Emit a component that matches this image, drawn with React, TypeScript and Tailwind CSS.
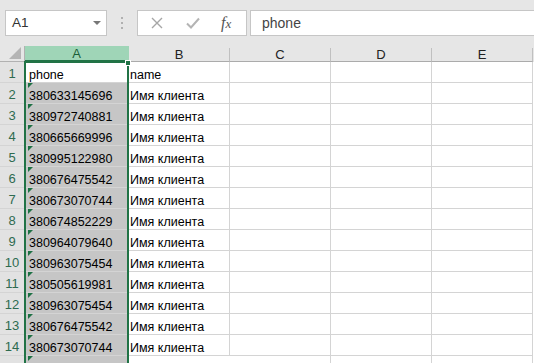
import React from 'react'

const phones = [
  '380633145696',
  '380972740881',
  '380665669996',
  '380995122980',
  '380676475542',
  '380673070744',
  '380674852229',
  '380964079640',
  '380963075454',
  '380505619981',
  '380963075454',
  '380676475542',
  '380673070744',
]

const cols = ['C', 'D', 'E']
const font = { fontFamily: '"Liberation Sans", Arial, sans-serif' }

function Triangle() {
  return (
    <span className="absolute left-[3px] top-0 h-0 w-0 border-r-[5px] border-t-[5px] border-r-transparent border-t-[#1e7145]" />
  )
}

function Row({ n, a, b, first, last }: { n: number; a: string; b: string; first?: boolean; last?: boolean }) {
  return (
    <div className="flex h-[21px] text-[12.5px] leading-[13px] text-black">
      <div className="flex w-[25px] shrink-0 items-end justify-center border-b border-r border-b-[#d4d4d4] border-r-[#b1b1b1] bg-[#e2e2e2] pb-[1px] text-[13px] leading-[14px] text-[#2e6b50]">
        {last ? '' : n}
      </div>
      <div
        className={`relative flex w-[104px] shrink-0 items-end border-b border-r border-[#d4d4d4] pl-[4px] ${
          first ? 'bg-white' : 'bg-[#c6c6c6]'
        }`}
      >
        {!first && <Triangle />}
        {a}
      </div>
      <div
        className={`flex w-[101px] shrink-0 items-end border-b border-[#d4d4d4] pl-[1px] ${
          last ? '' : 'border-r'
        }`}
      >
        {b}
      </div>
      {cols.map((c) => (
        <div key={c} className="w-[101px] shrink-0 border-b border-r border-[#d4d4d4]" />
      ))}
    </div>
  )
}

export default function App() {
  return (
    <div className="relative h-[363px] w-[534px] overflow-hidden bg-white" style={font}>
      {/* toolbar */}
      <div className="flex h-[46px] bg-[#e6e6e6] pl-[5px] pt-[10px]">
        <div className="relative flex h-[26px] w-[102px] shrink-0 items-center border border-[#c6c6c6] bg-white pl-[6px] text-[13.5px] text-[#333]">
          A1
          <span className="absolute right-[5px] top-[10px] h-0 w-0 border-l-[4px] border-r-[4px] border-t-[4px] border-l-transparent border-r-transparent border-t-[#777]" />
        </div>
        <div className="flex w-[30px] shrink-0 flex-col items-center gap-[3px] pt-[7px]">
          <span className="h-[2px] w-[2px] bg-[#b0b0b0]" />
          <span className="h-[2px] w-[2px] bg-[#b0b0b0]" />
          <span className="h-[2px] w-[2px] bg-[#b0b0b0]" />
        </div>
        <div className="flex h-[26px] w-[110px] shrink-0 items-center border border-[#c6c6c6] bg-white">
          <svg width="12" height="12" viewBox="0 0 12 12" className="ml-[13px]">
            <path d="M1 1 L11 11 M11 1 L1 11" stroke="#a6a6a6" strokeWidth="1.4" />
          </svg>
          <svg width="14" height="12" viewBox="0 0 14 12" className="ml-[23px]">
            <path d="M1 6.5 L5 10.5 L13 1.5" stroke="#b4b4b4" strokeWidth="2" fill="none" />
          </svg>
          <span
            className="ml-[21px] text-[16px] italic leading-none text-[#555]"
            style={{ fontFamily: '"Liberation Serif", "Times New Roman", serif' }}
          >
            f<span className="text-[13px]">x</span>
          </span>
        </div>
        <div className="ml-[3px] flex h-[26px] w-[300px] shrink-0 items-center border border-[#c6c6c6] bg-white pl-[11px] text-[14px] text-[#444]">
          phone
        </div>
      </div>

      {/* column headers */}
      <div className="flex h-[16px] bg-[#e6e6e6] pt-[2px] text-[13px] leading-[14px] text-[#222]">
        <div className="relative -mt-[2px] w-[25px] shrink-0 border-b border-r border-[#b1b1b1]">
          <span className="absolute bottom-[2px] right-[3px] h-0 w-0 border-b-[12px] border-l-[12px] border-b-[#b4b4b4] border-l-transparent" />
        </div>
        <div className="-mt-[2px] flex w-[104px] shrink-0 items-center justify-center border-b-2 border-r border-b-[#217346] border-r-[#9fd5b7] bg-[#9fd5b7] pt-[2px] text-[#1b5e38]">
          A
        </div>
        <div className="flex w-[101px] shrink-0 justify-center border-b border-r border-b-[#ababab] border-r-[#c0c0c0]">
          B
        </div>
        {cols.map((c) => (
          <div
            key={c}
            className="flex w-[101px] shrink-0 justify-center border-b border-r border-b-[#ababab] border-r-[#c0c0c0]"
          >
            {c}
          </div>
        ))}
      </div>

      {/* rows */}
      <Row n={1} a="phone" b="name" first />
      {phones.map((p, i) => (
        <Row key={i} n={i + 2} a={p} b="Имя клиента" />
      ))}
      <Row n={15} a="" b="" last />

      {/* selection */}
      <div className="pointer-events-none absolute left-[24px] top-[61px] h-[320px] w-[105px] border-2 border-[#217346]" />
      <div className="pointer-events-none absolute left-[125px] top-[60px] h-[6px] w-[6px] border border-white bg-[#217346]" />
    </div>
  )
}
